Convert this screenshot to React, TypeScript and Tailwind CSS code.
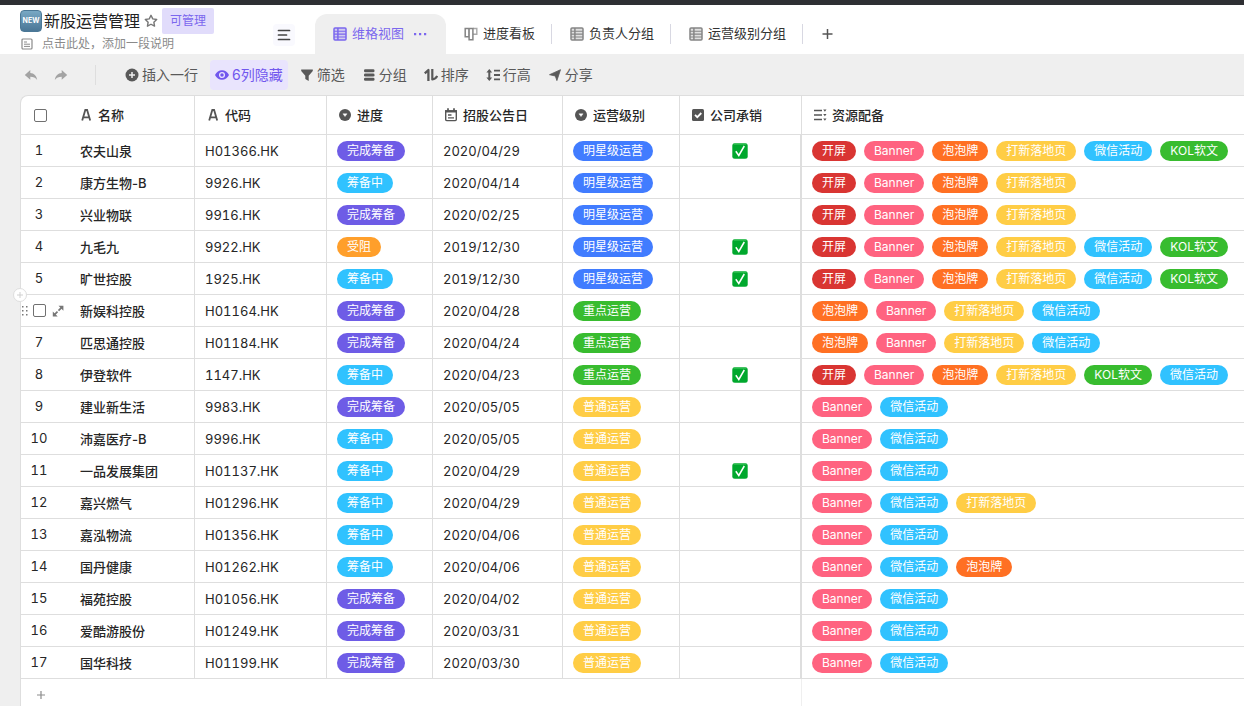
import type { ReactNode } from "react";

const tagColors: Record<string, string> = {
  完成筹备: "bg-[#6e5ce6]",
  筹备中: "bg-[#30c2ff]",
  受阻: "bg-[#ff9f2b]",
  明星级运营: "bg-[#417cff]",
  重点运营: "bg-[#38bc2f]",
  普通运营: "bg-[#ffcd45]",
  开屏: "bg-[#d93532]",
  Banner: "bg-[#ff6380]",
  泡泡牌: "bg-[#ff7023]",
  打新落地页: "bg-[#ffcd45]",
  微信活动: "bg-[#30c2ff]",
  KOL软文: "bg-[#38bc2f]",
};

type Row = {
  name: string;
  code: string;
  status: string;
  date: string;
  level: string;
  own: boolean;
  res: string[];
};

const all = ["开屏", "Banner", "泡泡牌", "打新落地页", "微信活动", "KOL软文"];
const four = all.slice(0, 4);
const noSplash = ["泡泡牌", "Banner", "打新落地页", "微信活动"];
const basic = ["Banner", "微信活动"];

const rows: Row[] = [
  { name: "农夫山泉", code: "H01366.HK", status: "完成筹备", date: "2020/04/29", level: "明星级运营", own: true, res: all },
  { name: "康方生物-B", code: "9926.HK", status: "筹备中", date: "2020/04/14", level: "明星级运营", own: false, res: four },
  { name: "兴业物联", code: "9916.HK", status: "完成筹备", date: "2020/02/25", level: "明星级运营", own: false, res: four },
  { name: "九毛九", code: "9922.HK", status: "受阻", date: "2019/12/30", level: "明星级运营", own: true, res: all },
  { name: "旷世控股", code: "1925.HK", status: "筹备中", date: "2019/12/30", level: "明星级运营", own: true, res: all },
  { name: "新娱科控股", code: "H01164.HK", status: "完成筹备", date: "2020/04/28", level: "重点运营", own: false, res: noSplash },
  { name: "匹思通控股", code: "H01184.HK", status: "完成筹备", date: "2020/04/24", level: "重点运营", own: false, res: noSplash },
  { name: "伊登软件", code: "1147.HK", status: "筹备中", date: "2020/04/23", level: "重点运营", own: true, res: [...four, "KOL软文", "微信活动"] },
  { name: "建业新生活", code: "9983.HK", status: "完成筹备", date: "2020/05/05", level: "普通运营", own: false, res: basic },
  { name: "沛嘉医疗-B", code: "9996.HK", status: "筹备中", date: "2020/05/05", level: "普通运营", own: false, res: basic },
  { name: "一品发展集团", code: "H01137.HK", status: "筹备中", date: "2020/04/29", level: "普通运营", own: true, res: basic },
  { name: "嘉兴燃气", code: "H01296.HK", status: "筹备中", date: "2020/04/29", level: "普通运营", own: false, res: [...basic, "打新落地页"] },
  { name: "嘉泓物流", code: "H01356.HK", status: "筹备中", date: "2020/04/06", level: "普通运营", own: false, res: basic },
  { name: "国丹健康", code: "H01262.HK", status: "筹备中", date: "2020/04/06", level: "普通运营", own: false, res: [...basic, "泡泡牌"] },
  { name: "福苑控股", code: "H01056.HK", status: "完成筹备", date: "2020/04/02", level: "普通运营", own: false, res: basic },
  { name: "爱酷游股份", code: "H01249.HK", status: "完成筹备", date: "2020/03/31", level: "普通运营", own: false, res: basic },
  { name: "国华科技", code: "H01199.HK", status: "完成筹备", date: "2020/03/30", level: "普通运营", own: false, res: basic },
];

const hovered = 5;

function Icon({ size = 14, children }: { size?: number; children: ReactNode }) {
  return (
    <svg width={size} height={size} viewBox={`0 0 ${size} ${size}`} fill="none" className="shrink-0" aria-hidden="true">
      {children}
    </svg>
  );
}

const GridIcon = () => (
  <Icon>
    <rect x="1" y="1" width="12" height="12" rx="1" fill="currentColor" fillOpacity=".25" />
    <rect x="1" y="1" width="12" height="12" rx="1" stroke="currentColor" strokeWidth="1.5" />
    <path d="M1 4.200h12M1 7.100h12M1 10h12" stroke="currentColor" strokeWidth="1.100" />
    <path d="M4.900 1v12" stroke="currentColor" strokeWidth="1.500" />
  </Icon>
);

const BoardIcon = () => (
  <Icon>
    <path d="M1.200 1.500h3.700v8.200H1.200zM5.100 1.500h3.800v11.300H5.100z" stroke="currentColor" strokeWidth="1.500" />
    <path d="M9 1.500h3.800v5.700H9" stroke="currentColor" strokeOpacity=".7" strokeWidth="1.400" />
  </Icon>
);

const UndoIcon = () => (
  <Icon>
    <path d="M6.300 2v3c3.800.2 6.200 2.800 6.900 6.900C11.500 9.600 9.400 8.800 6.300 8.800v3L.8 6.900 6.300 2z" fill="currentColor" />
  </Icon>
);

const TextIcon = () => (
  <Icon size={16}>
    <path d="M4.200 13.500 7.300 3h1.800l3.100 10.500M5.400 10.300h5.600" stroke="currentColor" strokeWidth="1.800" />
  </Icon>
);

const SelectIcon = () => (
  <Icon size={16}>
    <circle cx="8" cy="8" r="6" fill="currentColor" />
    <path d="M5.900 6.800h4.200L8 9.600 5.900 6.800z" fill="#fff" stroke="#fff" strokeWidth=".4" strokeLinejoin="round" />
  </Icon>
);

const DateIcon = () => (
  <Icon size={16}>
    <path d="M2.700 4h10.600v8.600a1 1 0 0 1-1 1H3.700a1 1 0 0 1-1-1V4z" stroke="currentColor" strokeWidth="1.400" />
    <path d="M2 3.200h12v2.300H2z" fill="currentColor" />
    <path d="M5 1.200v3M11 1.200v3" stroke="currentColor" strokeWidth="1.700" />
    <path d="M5 8h3.500M5 10.900h6" stroke="currentColor" strokeWidth="1.400" />
  </Icon>
);

const CheckIcon = () => (
  <Icon size={16}>
    <rect x="2" y="2" width="12" height="12" rx="1.500" fill="currentColor" />
    <path d="m5 7.800 2.300 2.300L11.300 6" stroke="#fff" strokeWidth="1.800" />
  </Icon>
);

const MultiIcon = () => (
  <Icon size={16}>
    <path d="M2 3.500h8M2 8h8M2 12.500h8" stroke="currentColor" strokeWidth="1.700" />
    <path d="M11.200 2.600h3.300l-1.600 2.100zM11.200 7.100h3.300l-1.600 2.100zM11.200 11.600h3.300l-1.600 2.100z" fill="currentColor" />
  </Icon>
);

const tools = [
  {
    label: "插入一行",
    icon: (
      <>
        <circle cx="7" cy="7" r="6.500" fill="currentColor" />
        <path d="M7 4v6M4 7h6" stroke="#efefef" strokeWidth="1.500" />
      </>
    ),
  },
  {
    label: "6列隐藏",
    active: true,
    icon: (
      <>
        <path d="M0 7c1.500-3 4-4.700 7-4.700S12.500 4 14 7c-1.500 3-4 4.700-7 4.700S1.500 10 0 7z" fill="currentColor" />
        <circle cx="7" cy="7" r="2.400" stroke="#e9e4fd" strokeWidth="1.300" />
      </>
    ),
  },
  { label: "筛选", icon: <path d="M1.200 1.500h11.600v1.600L8.700 7.700V13L5.300 11V7.700L1.200 3.100z" fill="currentColor" /> },
  {
    label: "分组",
    icon: (
      <g fill="currentColor">
        <rect x="2" y="1.200" width="10.500" height="3" rx="1.300" />
        <rect x="2" y="5.500" width="10.500" height="3" rx="1.300" />
        <rect x="2" y="9.800" width="10.500" height="3" rx="1.300" />
      </g>
    ),
  },
  {
    label: "排序",
    icon: (
      <>
        <path d="M.8 5.400 4.400 2v10.900" stroke="currentColor" strokeWidth="2.300" strokeLinejoin="round" />
        <path d="M8.300 1v10.500c2.600-.3 3.900-1.300 4.900-3.500" stroke="currentColor" strokeWidth="2.200" strokeLinejoin="round" />
      </>
    ),
  },
  {
    label: "行高",
    icon: (
      <>
        <path d="M3.300 1 6.200 4.600H4.300v4.800h1.900L3.300 13 .4 9.400h1.900V4.600H.4z" fill="currentColor" />
        <path d="M8 2.700h6M8 7h6M8 11.300h6" stroke="currentColor" strokeWidth="1.800" />
      </>
    ),
  },
  {
    label: "分享",
    icon: (
      <path
        d="M1.500 6.700 12.500 1.700 8.900 12.600 7.300 8z"
        fill="currentColor"
        stroke="currentColor"
        strokeWidth=".8"
        strokeLinejoin="round"
      />
    ),
  },
];

const views = [
  { label: "进度看板", icon: <BoardIcon /> },
  { label: "负责人分组", icon: <GridIcon /> },
  { label: "运营级别分组", icon: <GridIcon /> },
];

const columns = [
  { label: "名称", icon: <TextIcon /> },
  { label: "代码", icon: <TextIcon /> },
  { label: "进度", icon: <SelectIcon /> },
  { label: "招股公告日", icon: <DateIcon /> },
  { label: "运营级别", icon: <SelectIcon /> },
  { label: "公司承销", icon: <CheckIcon /> },
  { label: "资源配备", icon: <MultiIcon /> },
];

function Tag({ text }: { text: string }) {
  return (
    <span className={`block h-5 shrink-0 rounded-full px-[10px] text-xs leading-5 whitespace-nowrap text-white ${tagColors[text]}`}>
      {text}
    </span>
  );
}

function Checkbox({ label }: { label: string }) {
  return (
    <input
      type="checkbox"
      aria-label={label}
      className="block size-[13px] shrink-0 appearance-none rounded-[2px] border border-[#707070] bg-white"
    />
  );
}

function Header() {
  return (
    <header className="flex h-[49px] shrink-0 items-end bg-white">
      <div className="w-[273px] shrink-0 self-start pt-[3px] pl-5">
        <div className="flex items-center">
          <span className="flex size-[22px] items-center justify-center rounded-[4px] border border-[#4b7896] bg-linear-to-b from-[#78a8c4] to-[#4a7696] text-[7px] font-bold text-white">
            NEW
          </span>
          <h1 className="ml-[2px] text-base leading-[26px] text-[#222]">新股运营管理</h1>
          <button aria-label="收藏" className="ml-1 text-[#777]">
            <Icon>
              <path
                d="m7 1.300 1.750 3.600 3.950.55-2.850 2.750.7 3.950L7 10.250l-3.550 1.900.7-3.950L1.300 5.450l3.950-.55z"
                stroke="currentColor"
                strokeWidth="1.400"
                strokeLinejoin="round"
              />
            </Icon>
          </button>
          <span className="ml-1 rounded-[2px] bg-[#e1dcfb] px-2 text-xs leading-[26px] text-[#7b67ee]">可管理</span>
        </div>
        <div className="flex items-center gap-2 text-xs leading-5 text-[#8a8a8a]">
          <Icon>
            <rect x="2" y="2" width="10" height="10" rx="1" stroke="currentColor" strokeWidth="1.200" />
            <path d="M4 5h3M4 7.200h6M4 9.400h6" stroke="currentColor" />
          </Icon>
          <p>点击此处，添加一段说明</p>
        </div>
      </div>
      <button aria-label="视图列表" className="mr-5 mb-2 flex size-[22px] items-center justify-center rounded bg-[#f9f9fe] text-[#444]">
        <Icon>
          <path d="M1.500 2.500h11M1.500 7h8M1.500 11.500h11" stroke="currentColor" strokeWidth="1.700" strokeLinecap="round" />
        </Icon>
      </button>
      <nav className="flex text-[13px] text-[#333]">
        <div className="flex h-10 items-center rounded-t-xl bg-[#efefef] pr-[19px] pl-[18px] text-[#7b67ee]">
          <button className="flex items-center gap-[5px] whitespace-nowrap">
            <GridIcon />
            维格视图
          </button>
          <button aria-label="更多" className="ml-[9px]">
            <Icon>
              <path d="M1 6h2.200v2.200H1zM6 6h2.200v2.200H6zM11 6h2.200v2.200H11z" fill="currentColor" />
            </Icon>
          </button>
        </div>
        {views.map((v) => (
          <button
            key={v.label}
            className="mt-[10px] flex h-5 items-center gap-[5px] border-r border-[#d8d8e2] pr-4 pl-[18px] whitespace-nowrap"
          >
            <span className="text-[#858585]">{v.icon}</span>
            {v.label}
          </button>
        ))}
        <button aria-label="新建视图" className="mt-[10px] ml-[18px] flex h-5 items-center text-[#555]">
          <Icon>
            <path d="M6.500 2v10M1.500 7h10" stroke="currentColor" strokeWidth="1.500" />
          </Icon>
        </button>
      </nav>
    </header>
  );
}

function Toolbar() {
  return (
    <div className="flex h-[41px] shrink-0 items-center pl-6 text-sm text-[#595959]">
      <button aria-label="撤销" className="text-[#a3a3a3]">
        <UndoIcon />
      </button>
      <button aria-label="重做" className="ml-4 -scale-x-100 text-[#a3a3a3]">
        <UndoIcon />
      </button>
      <div className="mr-6 ml-[27px] h-5 w-px bg-[#dedede]" />
      <div className="flex gap-[7px]">
        {tools.map((t) => (
          <button
            key={t.label}
            className={`flex h-[30px] items-center gap-[3px] rounded px-[5px] whitespace-nowrap ${
              t.active ? "bg-[#e9e4fd] text-[#7157ee]" : ""
            }`}
          >
            <Icon>{t.icon}</Icon>
            {t.label}
          </button>
        ))}
      </div>
    </div>
  );
}

export default function App() {
  const cell = "border-b border-r border-[#dedede]";

  return (
    <div className="flex h-screen flex-col overflow-hidden border-t-5 border-[#2e2f33] bg-[#efefef] font-[Inter,'Noto_Sans_CJK_SC',sans-serif]">
      <Header />
      <Toolbar />
      <main className="ml-5 flex-1 rounded-tl-lg border-t border-l border-[#dedede] bg-white">
        <table className="w-full table-fixed border-separate border-spacing-0 text-[13px] leading-5 text-[#262626]">
          <colgroup>
            <col className="w-[57px]" />
            <col className="w-[117px]" />
            <col className="w-[132px]" />
            <col className="w-[106px]" />
            <col className="w-[130px]" />
            <col className="w-[117px]" />
            <col className="w-[122px]" />
            <col />
          </colgroup>
          <thead>
            <tr className="h-[39px]">
              <th className="border-b border-[#dedede] p-0 pl-[13px]">
                <Checkbox label="全选" />
              </th>
              {columns.map((c, i) => (
                <th
                  key={c.label}
                  className={`border-b border-[#dedede] py-0 pr-0 ${i === 0 ? "pl-0" : "pl-[10px]"} ${i === 6 ? "" : "border-r"}`}
                >
                  <div className="flex items-center gap-1 font-medium">
                    <span className="flex text-[#555]">{c.icon}</span>
                    {c.label}
                  </div>
                </th>
              ))}
            </tr>
          </thead>
          <tbody>
            {rows.map((r, i) => (
              <tr key={r.name} className="h-8">
                <td className="border-b border-[#dedede] p-0">
                  {i === hovered ? (
                    <div className="relative flex items-center text-[#777]">
                      <button
                        aria-label="插入行"
                        className="absolute -top-4 -left-2 flex size-[14px] items-center justify-center rounded-full border border-[#dedede] bg-white text-[#d0d0d0]"
                      >
                        <Icon size={8}>
                          <path d="M4 1v6M1 4h6" stroke="currentColor" />
                        </Icon>
                      </button>
                      <svg width="8" height="12" viewBox="0 0 8 12" fill="currentColor" className="mr-1" aria-hidden="true">
                        <path d="M1 1h1.500v1.500H1zM5 1h1.500v1.500H5zM1 5h1.500v1.500H1zM5 5h1.500v1.500H5zM1 9h1.500v1.500H1zM5 9h1.500v1.500H5z" />
                      </svg>
                      <Checkbox label="选择此行" />
                      <button aria-label="展开" className="ml-[6px]">
                        <Icon size={12}>
                          <path d="M6.500.8h4.900v4.900zM.8 6.500v4.900h4.900z" fill="currentColor" />
                          <path d="m9.500 2.700-3 3M5.500 6.700l-3 3" stroke="currentColor" strokeWidth="1.700" />
                        </Icon>
                      </button>
                    </div>
                  ) : (
                    <div className="w-9 pb-px text-center tabular-nums">{i + 1}</div>
                  )}
                </td>
                <td className={`${cell} pt-px pl-[2px] font-medium`}>{r.name}</td>
                <td className={`${cell} pt-px pl-[10px] tabular-nums`}>{r.code}</td>
                <td className={`${cell} pl-[10px]`}>
                  <div className="flex">
                    <Tag text={r.status} />
                  </div>
                </td>
                <td className={`${cell} pt-px pl-[10px] tabular-nums`}>{r.date}</td>
                <td className={`${cell} pl-[10px]`}>
                  <div className="flex">
                    <Tag text={r.level} />
                  </div>
                </td>
                <td className="border-r-2 border-b border-[#dedede] p-0">
                  {r.own && (
                    <svg width="16" height="16" viewBox="0 0 16 16" className="mx-auto" role="img" aria-label="是">
                      <rect x=".3" y=".3" width="15.400" height="15.400" rx="2.500" fill="#00a82d" />
                      <path d="M1.500 1h13" stroke="#4cc968" strokeWidth="1" />
                      <path d="m3.800 8.300 3 4.200L12.300 3" fill="none" stroke="#fff" strokeWidth="1.500" />
                    </svg>
                  )}
                </td>
                <td className="border-b border-[#dedede] p-0 pl-[10px]">
                  <div className="flex gap-2">
                    {r.res.map((t) => (
                      <Tag key={t} text={t} />
                    ))}
                  </div>
                </td>
              </tr>
            ))}
            <tr className="h-8">
              <td colSpan={7} className="border-r border-[#efefef] p-0 pl-[14px]">
                <button aria-label="新增一行" className="block text-[#8c8c8c]">
                  <Icon size={12}>
                    <path d="M6 2v8M2 6h8" stroke="currentColor" strokeWidth="1.200" />
                  </Icon>
                </button>
              </td>
              <td />
            </tr>
          </tbody>
        </table>
      </main>
    </div>
  );
}
